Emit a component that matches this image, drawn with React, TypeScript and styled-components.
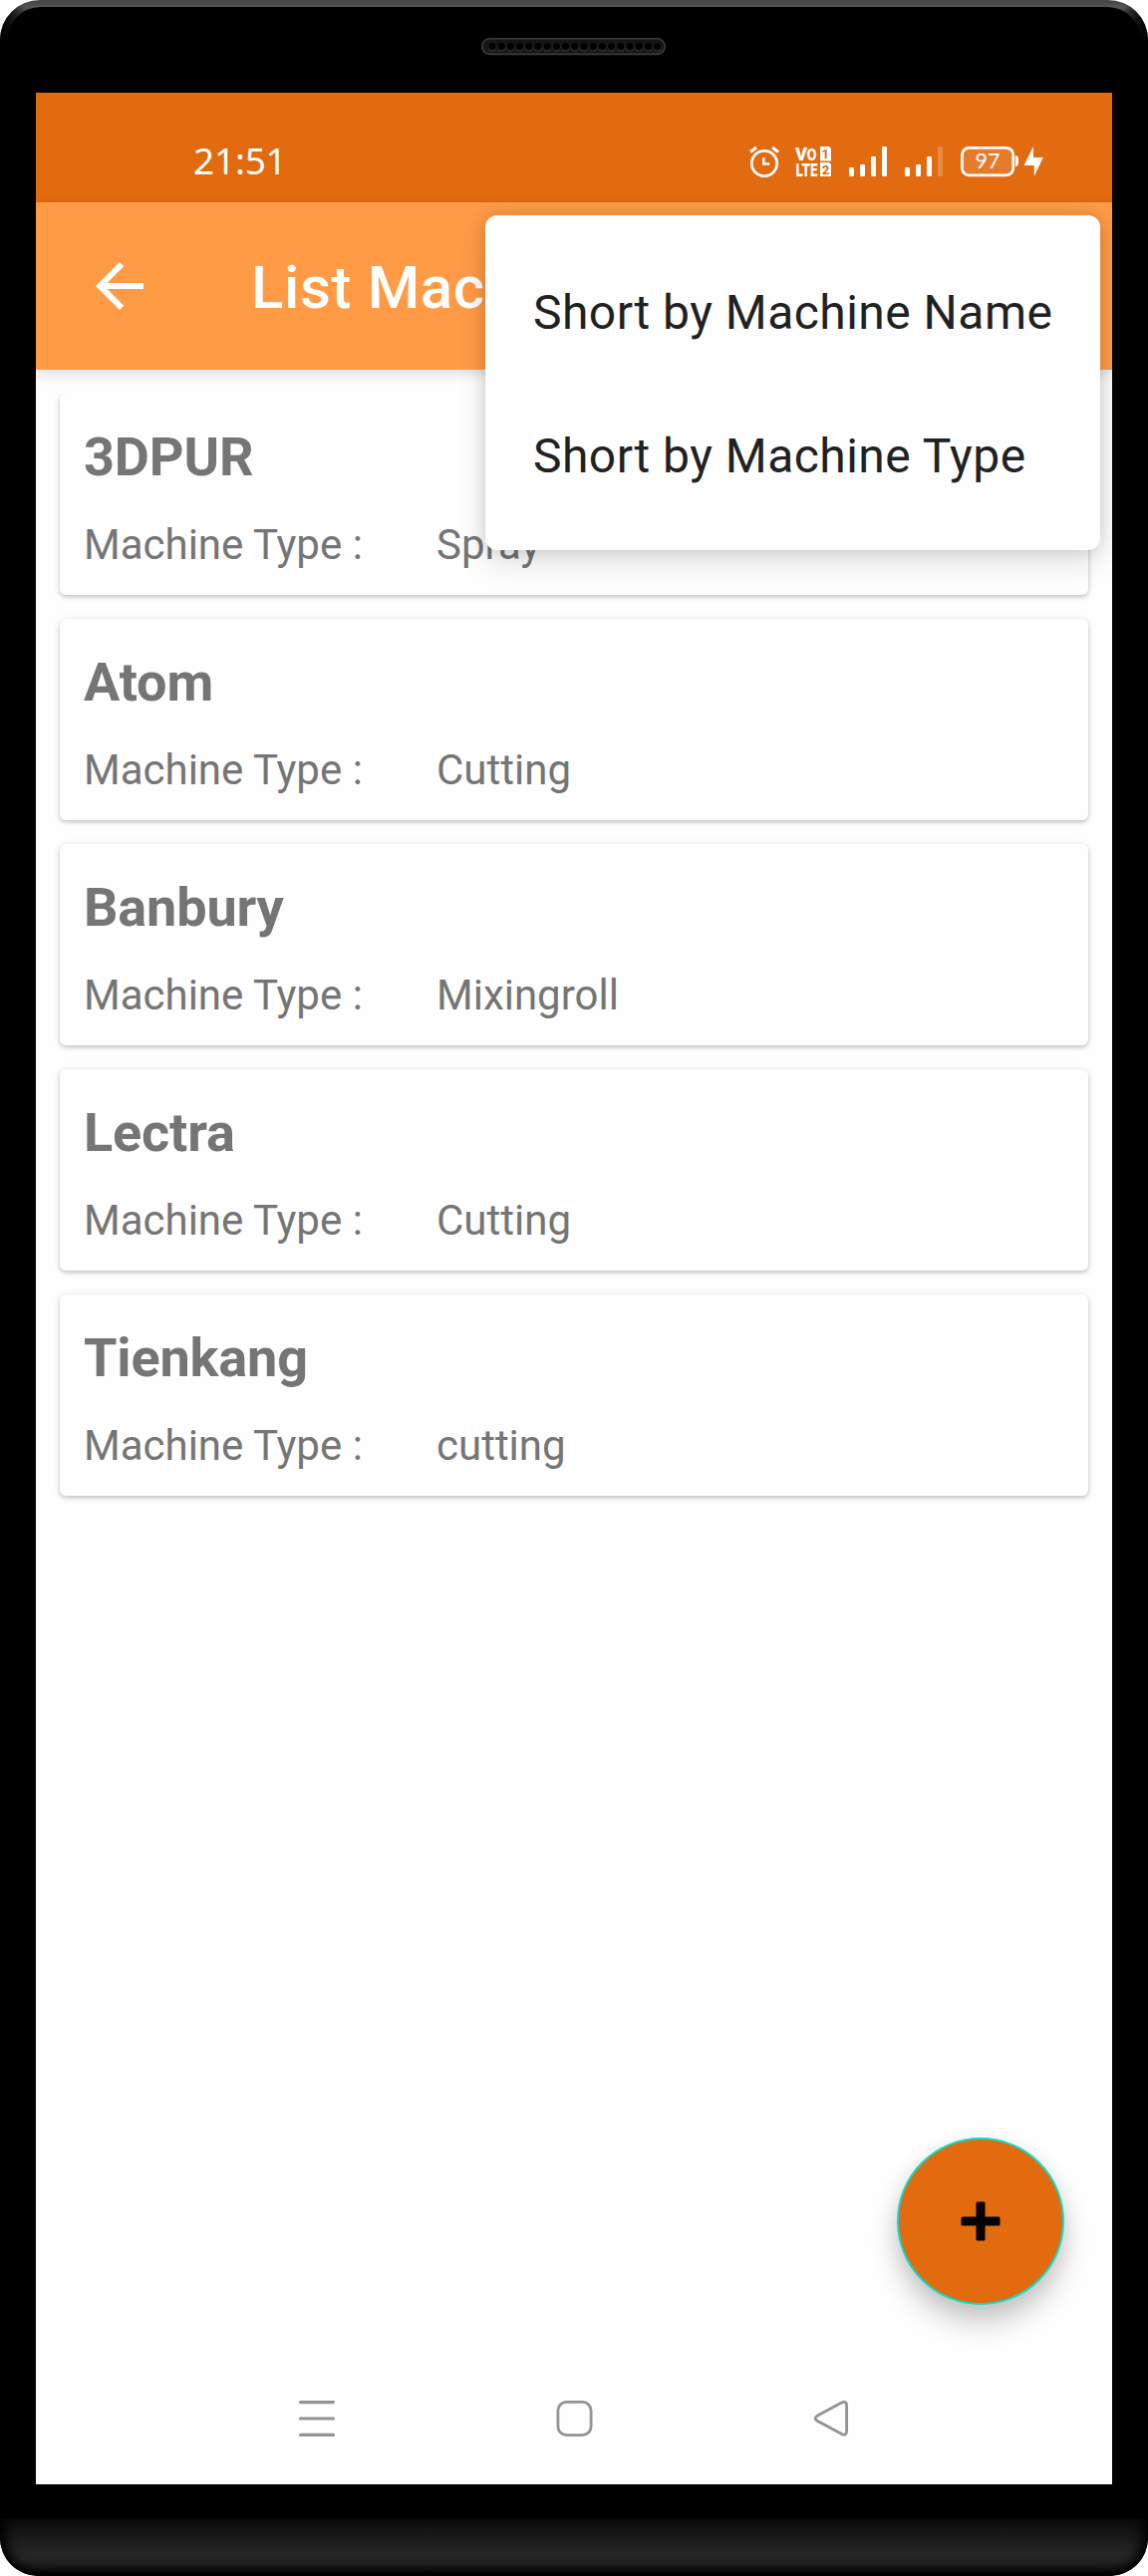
import React from "react";
import styled, { createGlobalStyle } from "styled-components";

const GlobalStyle = createGlobalStyle`
  *, *::before, *::after { box-sizing: border-box; }
  body { margin: 0; background: #fff; font-family: Roboto, "Noto Sans", sans-serif; }
  svg { display: block; overflow: visible; }
`;

const Phone = styled.div`
  width: 1152px;
  height: 2585px;
  padding-top: 7px;
  border-radius: 40px 40px 38px 38px;
  overflow: hidden;
  background: linear-gradient(#474747 0, #484848 3px, #585858 7px, #3c3c3c 12px, #1c1c1c 24px, #000 42px);
  display: flex;
  flex-direction: column;
  position: relative;
  &::before, &::after {
    content: "";
    position: absolute;
    top: 0;
    width: 36px;
    height: 44px;
  }
  &::before { left: 0; background: linear-gradient(100deg, #000 10%, transparent 60%); }
  &::after { right: 0; background: linear-gradient(-100deg, #000 10%, transparent 60%); }
`;

const Face = styled.div`
  position: relative;
  z-index: 1;
  flex: 1;
  margin: 0 7px;
  border-radius: 34px 34px 0 0;
  background: #000;
  display: flex;
  flex-direction: column;
  align-items: center;
`;

const EarpieceArea = styled.div`
  height: 86px;
  padding: 31px 1px 0 0;
`;

const Chin = styled.div`
  height: 58px;
  background: linear-gradient(#090909 0, #181818 17px, #262626 36px, #232323 43px, #141414 50px, #000 57px);
  border-radius: 0 0 38px 38px;
  box-shadow: inset 14px -4px 12px -8px #000, inset -14px -4px 12px -8px #000;
`;

const Screen = styled.main`
  position: relative;
  width: 1080px;
  height: 2400px;
  background: #fefefe;
  overflow: hidden;
  display: flex;
  flex-direction: column;
`;

const StatusBar = styled.div`
  height: 110px;
  background: #e26a0f;
  color: #fff;
  display: flex;
  align-items: flex-start;
  justify-content: space-between;
  padding: 53px 68px 0 158px;
`;

const Clock = styled.time`
  font: 400 37px/30px "Noto Sans", sans-serif;
  letter-spacing: -0.2px;
`;

const StatusIcons = styled.div`
  display: flex;
  height: 32px;
`;

const AppBar = styled.header`
  position: relative;
  z-index: 1;
  height: 168px;
  background: #ff9b45;
  box-shadow: 0 4px 12px rgba(0, 0, 0, 0.14);
  color: #fff;
  display: flex;
  align-items: center;
  gap: 96px;
  padding: 0 48px;
`;

const Title = styled.h1`
  margin: 0;
  padding-top: 4px;
  font-size: 60px;
  font-weight: 500;
  line-height: 70px;
  letter-spacing: 0.65px;
  white-space: nowrap;
`;

const MachineList = styled.div`
  flex: 1;
  margin-top: 24px;
  padding: 0 24px;
  overflow: hidden;
  display: flex;
  flex-direction: column;
  gap: 24px;
`;

const MachineCard = styled.article`
  height: 202px;
  flex: none;
  border-radius: 6px;
  background: #fefefe;
  box-shadow: 0 2px 4px rgba(0, 0, 0, 0.2), 0 1px 8px rgba(0, 0, 0, 0.08);
  padding: 32px 24px 0;
  color: #757575;
`;

const MachineName = styled.h2`
  margin: 0;
  font-size: 54px;
  font-weight: 700;
  line-height: 64px;
  letter-spacing: -0.15px;
`;

const TypeRow = styled.div`
  display: flex;
  margin-top: 31px;
  font-size: 42px;
  line-height: 50px;
`;

const TypeLabel = styled.span`
  width: 354px;
`;

const Menu = styled.div`
  position: absolute;
  z-index: 2;
  left: 451px;
  top: 13px;
  width: 617px;
  height: 336px;
  padding: 24px 0;
  border-radius: 12px;
  background: #fefefe;
  box-shadow: 0 12px 30px rgba(0, 0, 0, 0.12), 0 0 16px rgba(0, 0, 0, 0.14);
`;

const MenuItem = styled.div`
  height: 144px;
  padding: 3px 48px 0;
  font-size: 48px;
  line-height: 141px;
  letter-spacing: 0.46px;
  color: #212121;
  white-space: nowrap;
`;

const Fab = styled.button`
  position: absolute;
  right: 48px;
  bottom: 180px;
  width: 168px;
  height: 168px;
  padding: 0;
  border: 2px solid #0edcc8;
  border-radius: 50%;
  background: #e26a0f;
  box-shadow: 0 18px 28px rgba(0, 0, 0, 0.2), 0 4px 20px rgba(0, 0, 0, 0.07);
  display: flex;
  align-items: center;
  justify-content: center;
`;

const NavBar = styled.nav`
  height: 132px;
  padding: 0 260px 0 261px;
  display: flex;
  justify-content: space-between;
  align-items: center;
`;

const machines = [
  { name: "3DPUR", type: "Spray" },
  { name: "Atom", type: "Cutting" },
  { name: "Banbury", type: "Mixingroll" },
  { name: "Lectra", type: "Cutting" },
  { name: "Tienkang", type: "cutting" },
];

const Earpiece = () => (
  <svg width="185" height="18" viewBox="0 0 185 18">
    <rect x="0.8" y="0.8" width="183.4" height="15.6" rx="7.7" fill="#161616" stroke="#3d3d3d" strokeWidth="1.6" />
    {Array.from({ length: 19 }, (_, i) => (
      <g key={i}>
        <circle cx={11 + i * 9.2} cy="9.5" r="3.9" fill="#454545" />
        <circle cx={11 + i * 9.2} cy="8.7" r="3.7" fill="#000" />
      </g>
    ))}
  </svg>
);

const StatusGlyphs = () => (
  <svg width="298" height="32" viewBox="750 146 298 32" fill="#fff">
    <g fill="none" stroke="#fff">
      <circle cx="767" cy="164" r="12.7" strokeWidth="2.7" />
      <path d="M753 152.5l6-4.5M781 152.5l-6-4.5" strokeWidth="3" />
      <path d="M766.3 158v6.5h6" strokeWidth="2.6" />
    </g>
    <g fontFamily="Roboto" fontWeight="900">
      <text x="798" y="161" fontSize="19" textLength="12" lengthAdjust="spacingAndGlyphs">V</text>
      <text x="809.5" y="161" fontSize="17" textLength="10" lengthAdjust="spacingAndGlyphs">O</text>
      <text x="798.5" y="177" fontSize="19" textLength="22" lengthAdjust="spacingAndGlyphs">LTE</text>
    </g>
    <path d="M823 147h9l2 2v12.5h-11zM823 163h9l2 2v12h-11z" />
    <g fontFamily="Roboto" fontWeight="700" fontSize="13" fill="#e26a0f" textAnchor="middle">
      <text x="828.3" y="159">1</text>
      <text x="828.5" y="175">2</text>
    </g>
    {[852, 908].map((x) => (
      <g key={x}>
        <rect x={x} y="168" width="5" height="9" rx="1.3" />
        <rect x={x + 11} y="165" width="5" height="12" rx="1.3" />
        <rect x={x + 22} y="157" width="5" height="20" rx="1.3" />
        <rect x={x + 33} y="147" width="5" height="30" rx="1.3" opacity={x === 908 ? 0.22 : 1} />
      </g>
    ))}
    <rect x="965.4" y="148.4" width="51.4" height="27.4" rx="7" fill="#fff" fillOpacity=".12" stroke="#fff" strokeWidth="2.8" />
    <path d="M1019 156q3 .5 3 3v5q0 2.5-3 3z" />
    <text x="991" y="169" fontFamily="Lato" fontSize="21.5" textAnchor="middle">97</text>
    <path d="M1037 147v11h9.8l-9 19v-11h-10.3z" />
  </svg>
);

export default function App() {
  return (
    <>
      <GlobalStyle />
      <Phone>
        <Face>
          <EarpieceArea>
            <Earpiece />
          </EarpieceArea>
          <Screen>
            <StatusBar>
              <Clock>21:51</Clock>
              <StatusIcons>
                <StatusGlyphs />
              </StatusIcons>
            </StatusBar>
            <AppBar>
              <svg width="72" height="72" viewBox="0 0 24 24" fill="#fff">
                <path d="M20 11H7.83l5.59-5.59L12 4l-8 8 8 8 1.41-1.41L7.83 13H20v-2z" />
              </svg>
              <Title>List Machine</Title>
              <Menu>
                <MenuItem>Short by Machine Name</MenuItem>
                <MenuItem>Short by Machine Type</MenuItem>
              </Menu>
            </AppBar>
            <MachineList>
              {machines.map((m) => (
                <MachineCard key={m.name}>
                  <MachineName>{m.name}</MachineName>
                  <TypeRow>
                    <TypeLabel>Machine Type :</TypeLabel>
                    <span>{m.type}</span>
                  </TypeRow>
                </MachineCard>
              ))}
            </MachineList>
            <NavBar>
              <svg width="42" height="42" viewBox="0 0 42 42" fill="none" stroke="#939393" strokeWidth="3.2" strokeLinecap="round">
                <path d="M4.5 4.6h33M4.5 21h33M4.5 37.4h33" />
              </svg>
              <svg width="42" height="42" viewBox="0 0 42 42" fill="none" stroke="#939393" strokeWidth="2.8">
                <rect x="3.9" y="4.4" width="33.2" height="33.2" rx="8.5" />
              </svg>
              <svg width="42" height="42" viewBox="0 0 42 42" fill="none" stroke="#939393" strokeWidth="2.8">
                <path d="M6 18.3L31.500 4.6Q35.600 3.4 35.600 8V33.5Q35.600 38 31.500 36.900L6 23.3Q2.200 20.8 6 18.3z" />
              </svg>
            </NavBar>
            <Fab aria-label="Add machine">
              <svg width="40" height="40" viewBox="0 0 40 40">
                <path d="M17 .5h6q1.5 0 1.5 1.5v13.5h13.5q1.5 0 1.5 1.5v6q0 1.5-1.5 1.5h-13.5v13.5q0 1.5-1.5 1.5h-6q-1.5 0-1.5-1.5v-13.5h-13.5q-1.5 0-1.5-1.5v-6q0-1.5 1.5-1.5h13.5v-13.5q0-1.5 1.5-1.5z" />
              </svg>
            </Fab>
          </Screen>
        </Face>
        <Chin />
      </Phone>
    </>
  );
}
